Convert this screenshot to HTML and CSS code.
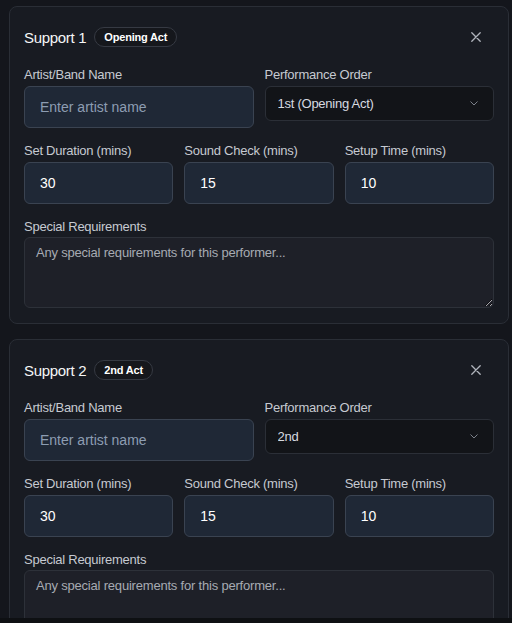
FILE: index.html
```html
<!DOCTYPE html>
<html lang="en">
<head>
<meta charset="utf-8">
<title>Support Acts</title>
<link rel="stylesheet" href="styles.css">
</head>
<body>
<div class="viewport">
  <div class="list">
    <section class="card">
      <header class="card-head">
        <div class="title-wrap">
          <h3 class="title">Support 1</h3>
          <span class="badge">Opening Act</span>
        </div>
        <button class="close" aria-label="Remove">
          <svg width="10" height="10" viewBox="0 0 10 10"><path d="M0.8 0.8L9.2 9.2M9.2 0.8L0.8 9.2" stroke="currentColor" stroke-width="1.3" stroke-linecap="round" fill="none"/></svg>
        </button>
      </header>
      <div class="grid two">
        <div class="field">
          <label class="label">Artist/Band Name</label>
          <input class="input" type="text" placeholder="Enter artist name">
        </div>
        <div class="field">
          <label class="label">Performance Order</label>
          <div class="select-wrap">
            <select class="select"><option>1st (Opening Act)</option></select>
            <svg class="chev" width="8" height="5" viewBox="0 0 8 5"><path d="M0.5 0.5L4 4L7.5 0.5" stroke="currentColor" stroke-width="1" fill="none"/></svg>
          </div>
        </div>
      </div>
      <div class="grid three">
        <div class="field">
          <label class="label">Set Duration (mins)</label>
          <input class="input" type="text" value="30">
        </div>
        <div class="field">
          <label class="label">Sound Check (mins)</label>
          <input class="input" type="text" value="15">
        </div>
        <div class="field">
          <label class="label">Setup Time (mins)</label>
          <input class="input" type="text" value="10">
        </div>
      </div>
      <div class="field">
        <label class="label label-ta">Special Requirements</label>
        <textarea class="textarea" placeholder="Any special requirements for this performer..."></textarea>
      </div>
    </section>

    <section class="card">
      <header class="card-head">
        <div class="title-wrap">
          <h3 class="title">Support 2</h3>
          <span class="badge">2nd Act</span>
        </div>
        <button class="close" aria-label="Remove">
          <svg width="10" height="10" viewBox="0 0 10 10"><path d="M0.8 0.8L9.2 9.2M9.2 0.8L0.8 9.2" stroke="currentColor" stroke-width="1.3" stroke-linecap="round" fill="none"/></svg>
        </button>
      </header>
      <div class="grid two">
        <div class="field">
          <label class="label">Artist/Band Name</label>
          <input class="input" type="text" placeholder="Enter artist name">
        </div>
        <div class="field">
          <label class="label">Performance Order</label>
          <div class="select-wrap">
            <select class="select"><option>2nd</option></select>
            <svg class="chev" width="8" height="5" viewBox="0 0 8 5"><path d="M0.5 0.5L4 4L7.5 0.5" stroke="currentColor" stroke-width="1" fill="none"/></svg>
          </div>
        </div>
      </div>
      <div class="grid three">
        <div class="field">
          <label class="label">Set Duration (mins)</label>
          <input class="input" type="text" value="30">
        </div>
        <div class="field">
          <label class="label">Sound Check (mins)</label>
          <input class="input" type="text" value="15">
        </div>
        <div class="field">
          <label class="label">Setup Time (mins)</label>
          <input class="input" type="text" value="10">
        </div>
      </div>
      <div class="field">
        <label class="label label-ta">Special Requirements</label>
        <textarea class="textarea" placeholder="Any special requirements for this performer..."></textarea>
      </div>
    </section>
  </div>
</div>
</body>
</html>
```
FILE: styles.css
```css
* { box-sizing: border-box; }
html, body {
  margin: 0;
  padding: 0;
  background: #0e1013;
  color-scheme: dark;
}
body {
  font-family: "Liberation Sans", Arial, sans-serif;
  color: #e5e7eb;
}
.viewport {
  height: 618px;
  overflow: hidden;
  background: #14161c;
}
.list {
  padding: 6px 3px 0 9px;
}
.card {
  background: #181b22;
  border: 1px solid #2a2e36;
  border-radius: 8px;
  padding: 14px 14px 15px 14px;
  margin-bottom: 15px;
}
.card-head {
  height: 32px;
  display: flex;
  align-items: center;
  justify-content: space-between;
  margin-bottom: 13px;
}
.title-wrap {
  display: flex;
  align-items: center;
  gap: 8px;
}
.title {
  margin: 0;
  font-size: 15px;
  font-weight: 500;
  letter-spacing: -0.3px;
  color: #f5f6f7;
}
.badge {
  height: 20px;
  display: inline-flex;
  align-items: center;
  padding: 0 9px;
  border: 1px solid #363a43;
  border-radius: 10px;
  background: #15171c;
  font-size: 11px;
  font-weight: 700;
  letter-spacing: -0.2px;
  color: #ffffff;
}
.close {
  width: 28px;
  height: 28px;
  margin-right: 4px;
  padding: 0;
  border: 0;
  background: transparent;
  color: #b0b4bc;
  display: flex;
  align-items: center;
  justify-content: center;
}
.grid {
  display: grid;
  gap: 11px;
  align-items: start;
  margin-bottom: 14px;
}
.grid.two { grid-template-columns: 1fr 1fr; }
.grid.three { grid-template-columns: 1fr 1fr 1fr; }
.field {
  display: flex;
  flex-direction: column;
  min-width: 0;
}
.label {
  display: block;
  font-size: 13px;
  line-height: 16px;
  padding-top: 1px;
  letter-spacing: -0.25px;
  color: #c6cad1;
  margin-bottom: 3px;
}
.label-ta { margin-bottom: 2px; }
.input {
  width: 100%;
  height: 42px;
  padding: 0 12px 0 15px;
  border: 1px solid #3a4351;
  border-radius: 6px;
  background: #1f2836;
  font-family: inherit;
  font-size: 14px;
  color: #ffffff;
  outline: none;
}
.input::placeholder {
  color: #8d9db2;
}
.select-wrap {
  position: relative;
}
.select {
  width: 100%;
  height: 35px;
  padding: 0 30px 0 12px;
  border: 1px solid #2b2f37;
  border-radius: 6px;
  background: #121418;
  font-family: inherit;
  font-size: 13px;
  letter-spacing: -0.25px;
  color: #d7dae0;
  appearance: none;
  -webkit-appearance: none;
  outline: none;
}
.chev {
  position: absolute;
  right: 16px;
  top: 15px;
  color: #7c818a;
  pointer-events: none;
}
.textarea {
  display: block;
  width: 100%;
  height: 71px;
  padding: 6px 11px;
  border: 1px solid #2d3139;
  border-radius: 6px;
  background: #1e2028;
  font-family: inherit;
  font-size: 13px;
  line-height: 18px;
  letter-spacing: -0.2px;
  color: #e5e7eb;
  resize: vertical;
  outline: none;
}
.textarea::placeholder {
  color: #a7abb3;
}
```
